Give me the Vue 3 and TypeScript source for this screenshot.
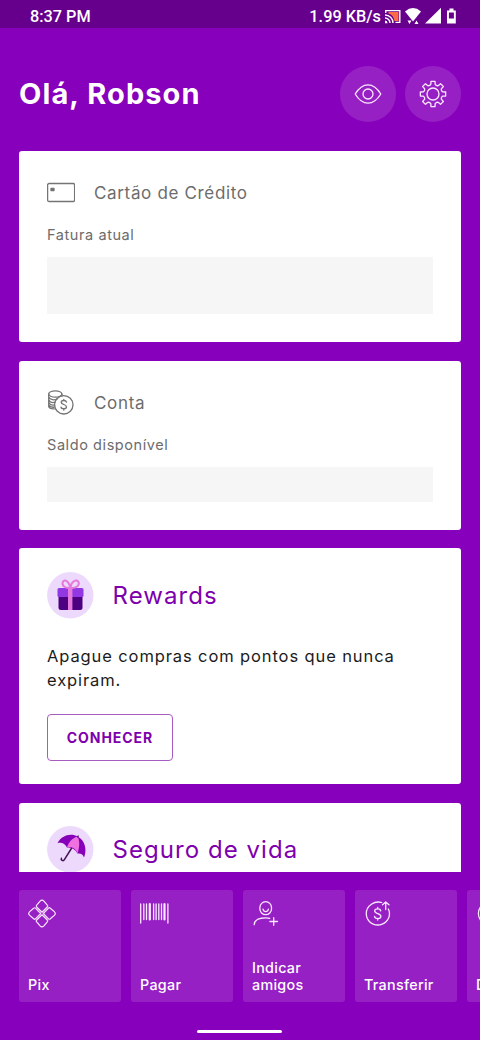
<script setup lang="ts">
interface Shortcut {
  label: string
  icon: 'pix' | 'barcode' | 'invite' | 'transfer' | 'deposit'
}

const shortcuts: Shortcut[] = [
  { label: 'Pix', icon: 'pix' },
  { label: 'Pagar', icon: 'barcode' },
  { label: 'Indicar amigos', icon: 'invite' },
  { label: 'Transferir', icon: 'transfer' },
  { label: 'Depositar', icon: 'deposit' },
]

const gearTeeth = Array.from({ length: 8 }, (_, i) => i * 45)
const gearPath = gearTeeth
  .map((deg, i) => {
    const point = (r: number, offset: number) => {
      const a = ((deg + offset - 90) * Math.PI) / 180
      return `${(14 + r * Math.cos(a)).toFixed(2)} ${(14 + r * Math.sin(a)).toFixed(2)}`
    }
    return `${i === 0 ? 'M' : 'L'}${point(9.8, -13)} L${point(12.8, -9)} L${point(12.8, 9)} L${point(9.8, 13)} Q${point(8.6, 22.5)} ${point(9.8, 32)}`
  })
  .join(' ') + 'Z'
</script>

<template>
  <div class="screen">
    <div class="status">
      <span class="clock">8:37 PM</span>
      <span class="speed">1.99 KB/s</span>
      <svg class="status-icons" width="74" height="20" viewBox="0 0 74 20">
        <path d="M4.500 6H14.500V15H10.500C10 11.500 8 8.500 4.500 7.500Z" fill="#ff6b45" />
        <path d="M1.700 7V4.600H15.800V16.400H11.500" fill="none" stroke="#fff" stroke-width="1.400" />
        <path d="M1 9A8 8 0 0 1 9 17M1 12A5 5 0 0 1 6 17" fill="none" stroke="#fff" stroke-width="1.400" />
        <path d="M1 14.400A3 3 0 0 1 3.600 17.200H1Z" fill="#fff" />
        <path d="M21 5.500Q29 -1.300 37 5.500L29 15.500Z" fill="#fff" />
        <path d="M23.500 14.500h4l-2 3.500ZM30.500 18l2-3.500 2 3.500Z" fill="#fff" />
        <path d="M41 17.500L57 1.700V17.500Z" fill="#fff" />
        <path d="M65.500 2.500h4v2h2.300v13h-8.800V4.500H65.500Z" fill="#fff" />
        <path d="M64.900 6.500h5v6h-5Z" fill="#66008c" />
      </svg>
    </div>

    <header class="header">
      <h1>Olá, Robson</h1>
      <button class="round">
        <svg width="28" height="28" viewBox="0 0 28 28" class="line light">
          <path d="M1.200 14C4.500 8.500 8.500 4.800 14 4.800S23.500 8.500 26.800 14C23.500 19.500 19.500 23.200 14 23.200S4.500 19.500 1.200 14Z" />
          <circle cx="14" cy="14" r="5" />
        </svg>
      </button>
      <button class="round">
        <svg width="28" height="28" viewBox="0 0 28 28" class="line light">
          <path :d="gearPath" />
          <circle cx="14" cy="14" r="6" />
        </svg>
      </button>
    </header>

    <main class="cards">
      <section class="card credit">
        <div class="card-head">
          <svg width="28" height="28" viewBox="0 0 28 28" class="line gray">
            <rect x=".600" y="4.500" width="27" height="18" rx="1.500" />
            <rect x="4" y="9.500" width="3" height="2" fill="#666" />
          </svg>
          <h2 class="t-credit">Cartão de Crédito</h2>
        </div>
        <p class="sub">Fatura atual</p>
        <div class="hidden-value"></div>
      </section>

      <section class="card account">
        <div class="card-head">
          <svg width="28" height="28" viewBox="0 0 28 28" class="line gray">
            <ellipse cx="8.300" cy="5" rx="6.600" ry="3.200" />
            <path d="M1.700 5V17.500C2.200 19 4.700 20 7.300 19.800M14.900 5V7M1.700 8C3.200 11 7.500 11.500 10.500 9.800M1.700 10.700C3.200 13.500 6 14 8.300 13.200M1.700 13.300C3.200 16 5.500 16.500 7.300 15.800M1.700 15.800C3.200 18 5.500 18.500 7.300 18" />
            <circle cx="16.800" cy="15.800" r="9.200" />
            <path d="M19.500 13.100C19 11 14.200 10.900 14.200 13.300C14.200 16.100 19.500 14.900 19.500 17.900C19.500 20.300 14.300 20.300 14 18.100M16.800 10.400V11.600M16.800 19.700V21.200" />
          </svg>
          <h2 class="t-account">Conta</h2>
        </div>
        <p class="sub">Saldo disponível</p>
        <div class="hidden-value"></div>
      </section>

      <section class="card rewards">
        <div class="promo-head">
          <svg width="47" height="47" viewBox="0 0 47 47">
            <circle cx="23.300" cy="23.300" r="23.200" fill="#ecd9fc" />
            <path d="M11.500 23H35.500V35.500Q35.500 38 33 38H14Q11.500 38 11.500 35.500Z" fill="#4d0080" />
            <rect x="10.500" y="16" width="26" height="9" rx="1.500" fill="#9238e3" />
            <path d="M21 16H25.400V38H21Z" fill="#e679dc" />
            <path d="M23.300 16C18 16.500 14.500 13.500 15.800 10C17.500 6.500 22.500 9.500 23.300 16C24 9.500 29.500 6.500 31.500 10C33 13.500 29 16.500 23.300 16Z" fill="none" stroke="#e679dc" stroke-width="2" />
          </svg>
          <h2 class="t-rewards">Rewards</h2>
        </div>
        <p class="copy">Apague compras com pontos que nunca expiram.</p>
        <button class="learn">CONHECER</button>
      </section>

      <section class="card insurance">
        <div class="promo-head">
          <svg width="47" height="47" viewBox="0 0 47 47">
            <circle cx="23.300" cy="23.300" r="23.200" fill="#ecd9fc" />
            <path d="M25 21.500L17.400 33.700C16.200 35.600 13.500 34.200 14.400 32.200" fill="none" stroke="#421254" stroke-width="1.500" stroke-linecap="round" />
            <path d="M10.500 17.300C14.500 9 24 6.700 30.700 10.500C38 14.500 40.300 23.500 37 31.500C36 28.500 34 27 30.500 27.500C28 23 24.500 21.200 20 21.500C18 17.500 14.500 16 10.500 17.300Z" fill="#8500b8" />
            <path d="M30.700 10.500C25.500 11.800 22 15.500 20 21.500C24 19.700 29 22.500 30.500 27.500C32.500 21.500 33 15.500 30.700 10.500Z" fill="#ef70df" />
            <path d="M30.600 11L31.200 10" stroke="#421254" stroke-width="1.400" stroke-linecap="round" />
          </svg>
          <h2 class="t-insurance">Seguro de vida</h2>
        </div>
      </section>
    </main>

    <nav class="shortcuts">
      <button v-for="item in shortcuts" :key="item.icon" class="tile">
        <svg width="30" height="30" viewBox="0 0 30 30" class="line light">
          <template v-if="item.icon === 'pix'">
            <path v-for="r in [0, 90, 180, 270]" :key="r" d="M14 13.200L8.700 8Q7.800 7.100 8.700 6.200L12.100 2.200Q14 .2 15.900 2.200L19.300 6.200Q20.200 7.100 19.300 8Z" :transform="`rotate(${r} 14 14.500)`" class="lobe" />
          </template>
          <template v-else-if="item.icon === 'barcode'">
            <path d="M.700 5V24M27.900 5V24M3.800 5V20.500M6.500 5V20.500M13.600 5V20.500M16.100 5V20.500M18.800 5V20.500M21.500 5V20.500" />
            <path d="M9.800 5V20.500M24.500 5V20.500" stroke-width="2.200" />
          </template>
          <template v-else-if="item.icon === 'invite'">
            <rect x="7.900" y="2.700" width="11.600" height="13" rx="5.800" />
            <path d="M11 10.200C11.700 13.400 15.700 13.400 16.400 10.200M2.200 25.700C2.400 20 7.700 18.800 13.700 18.800Q16.200 18.800 17.700 19.400M21.700 18.700V26.300M17.900 22.500H25.500" />
          </template>
          <template v-else-if="item.icon === 'transfer'">
            <path d="M17.700 3.500C10.700 1.500 2.300 6.300 2.300 14.500C2.300 21.100 7.200 26 13.700 26C20.200 26 25.500 21.100 25.500 14.500Q25.500 12 24.300 10M21.700 10.500V3.500M18.500 5.800L21.700 3L25 5.800" />
            <path d="M16.700 11.800C16.200 9.300 10.700 9.200 10.700 12.100C10.700 15.300 16.900 13.800 16.900 17.300C16.900 20.300 11 20.300 10.500 17.300M13.700 8.500V9.800M13.700 19.600V21" />
          </template>
          <template v-else>
            <circle cx="14" cy="14.500" r="11.600" />
          </template>
        </svg>
        <span>{{ item.label }}</span>
      </button>
    </nav>
    <div class="home"></div>
  </div>
</template>

<style>
body {
  background: #8700bb;
}
</style>

<style scoped>
* {
  box-sizing: border-box;
  margin: 0;
}
.screen {
  width: 480px;
  height: 1040px;
  overflow: hidden;
  background: #8700bb;
  display: flex;
  flex-direction: column;
  font-family: Inter, "Liberation Sans", sans-serif;
  color: #fff;
}
.status {
  flex: none;
  height: 28px;
  padding: 3px 22px 0 30px;
  background: #66008c;
  display: flex;
  font: 500 16.300px/27px Roboto, sans-serif;
}
.speed {
  margin-left: auto;
  margin-right: 3px;
}
.clock,
.speed {
  white-space: nowrap;
}
.status-icons {
  margin-top: 3px;
}
.header {
  flex: none;
  height: 123px;
  padding: 38px 19px 0;
  display: flex;
  gap: 9px;
}
h1 {
  flex: 1;
  font-size: 29px;
  line-height: 56px;
  font-weight: 700;
  letter-spacing: 1.100px;
  white-space: nowrap;
}
button {
  font-family: inherit;
  padding: 0;
  border: 0;
}
.round {
  width: 56px;
  height: 56px;
  border-radius: 50%;
  background: #9720c5;
  display: flex;
  align-items: center;
  justify-content: center;
}
.line {
  flex: none;
  fill: none;
  stroke-width: 1.300;
  stroke-linecap: round;
  stroke-linejoin: round;
}
.light {
  stroke: #fbe8ff;
}
.lobe {
  stroke-width: 1.200;
}
.gray {
  stroke: #747474;
}
.cards {
  flex: none;
  height: 720.500px;
  padding: 0 19px;
  overflow: hidden;
  display: flex;
  flex-direction: column;
  gap: 18.600px;
}
.card {
  flex: none;
  background: #fff;
  border-radius: 3px;
  padding: 28px;
  color: #6c6c6c;
}
.credit {
  height: 191px;
}
.account {
  height: 169px;
}
.rewards {
  height: 236px;
  padding-top: 23.500px;
}
.insurance {
  height: 236px;
  padding-top: 23px;
}
.card-head {
  display: flex;
  align-items: center;
  gap: 19px;
  height: 28px;
}
h2 {
  font-weight: 400;
  font-size: 17px;
  white-space: nowrap;
}
.sub {
  font-size: 14.500px;
  line-height: 20px;
  margin: 18px 0 12px;
  letter-spacing: 0.580px;
}
.hidden-value {
  height: 56.500px;
  background: #f6f6f6;
}
.account .hidden-value {
  height: 35px;
}
.promo-head {
  display: flex;
  align-items: center;
  gap: 18.500px;
  height: 48px;
  color: #7e00ad;
}
.promo-head h2 {
  font-size: 24px;
  letter-spacing: 1.050px;
}
.copy {
  margin-top: 24.500px;
  color: #1b1b1b;
  font-size: 16.500px;
  line-height: 24px;
  letter-spacing: 0.890px;
}
.learn {
  margin-top: 21.500px;
  width: 126px;
  height: 47px;
  border: 1px solid #a75cc2;
  border-radius: 4px;
  background: #fff;
  color: #7e00ad;
  font-size: 14px;
  font-weight: 700;
  letter-spacing: 0.950px;
}
.t-credit,
.t-account {
  letter-spacing: 0.660px;
}
.shortcuts {
  flex: none;
  padding: 18.500px 0 0 18.500px;
  display: flex;
  gap: 9.500px;
}
.tile {
  flex: none;
  width: 102.500px;
  height: 112px;
  border-radius: 3px;
  background: #9720c5;
  color: #fff;
  padding: 9px 9px 8.500px 9.500px;
  display: flex;
  flex-direction: column;
  justify-content: space-between;
  align-items: flex-start;
  text-align: left;
  font-size: 14.300px;
  line-height: 17.500px;
  font-weight: 500;
  letter-spacing: 0.300px;
}
.home {
  flex: none;
  width: 85px;
  height: 3px;
  margin: 28px 0 0 197px;
  border-radius: 2px;
  background: #fff;
}
</style>
